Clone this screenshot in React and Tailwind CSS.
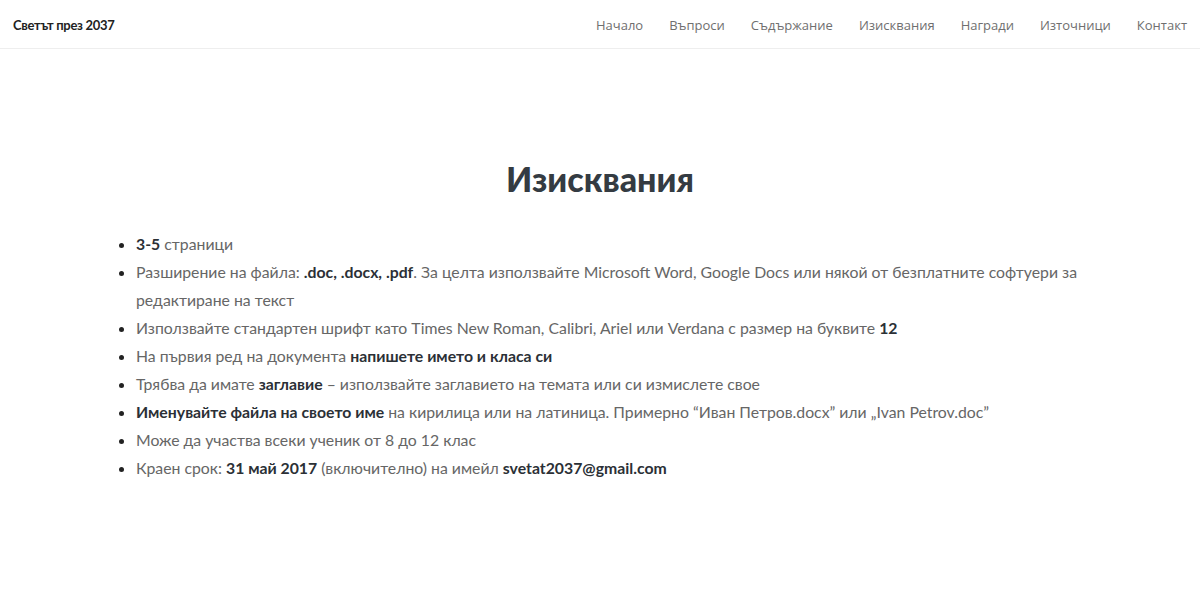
import React from "react";

const nav = ["Начало", "Въпроси", "Съдържание", "Изисквания", "Награди", "Източници", "Контакт"];

export default function App() {
  const B = ({ children }) => <b className="font-bold text-[#2b3036]">{children}</b>;
  return (
    <div className="min-h-[593px] bg-white">
      <header className="h-[49px] border-b border-[#eeeeee] flex items-center justify-between pl-[13px] pr-[13px] pt-[4px]">
        <div className="text-[13px] font-bold text-[#222] tracking-[-0.3px]" style={{ fontFamily: "Lato, sans-serif" }}>
          Светът през 2037
        </div>
        <nav className="flex items-center gap-[26px] text-[13px] text-[#6f6f6f]" style={{ fontFamily: "'Open Sans', sans-serif" }}>
          {nav.map((n) => (
            <span key={n}>{n}</span>
          ))}
        </nav>
      </header>
      <main className="w-[960px] mx-auto pt-[108px]" style={{ fontFamily: "Lato, 'Noto Sans', sans-serif" }}>
        <h1 className="text-center text-[34px] leading-[44px] font-black text-[#343b42] mb-[29px]">Изисквания</h1>
        <ul className="list-disc pl-[16px] text-[15.8px] leading-[28px] text-[#666] marker:text-[#222]">
          <li><B>3-5</B> страници</li>
          <li>Разширение на файла: <B>.doc, .docx, .pdf</B>. За целта използвайте Microsoft Word, Google Docs или някой от безплатните софтуери за редактиране на текст</li>
          <li>Използвайте стандартен шрифт като Times New Roman, Calibri, Ariel или Verdana с размер на буквите <B>12</B></li>
          <li>На първия ред на документа <B>напишете името и класа си</B></li>
          <li>Трябва да имате <B>заглавие</B> – използвайте заглавието на темата или си измислете свое</li>
          <li><B>Именувайте файла на своето име</B> на кирилица или на латиница. Примерно “Иван Петров.docx” или „Ivan Petrov.doc”</li>
          <li>Може да участва всеки ученик от 8 до 12 клас</li>
          <li>Краен срок: <B>31 май 2017</B> (включително) на имейл <B>svetat2037@gmail.com</B></li>
        </ul>
      </main>
    </div>
  );
}
